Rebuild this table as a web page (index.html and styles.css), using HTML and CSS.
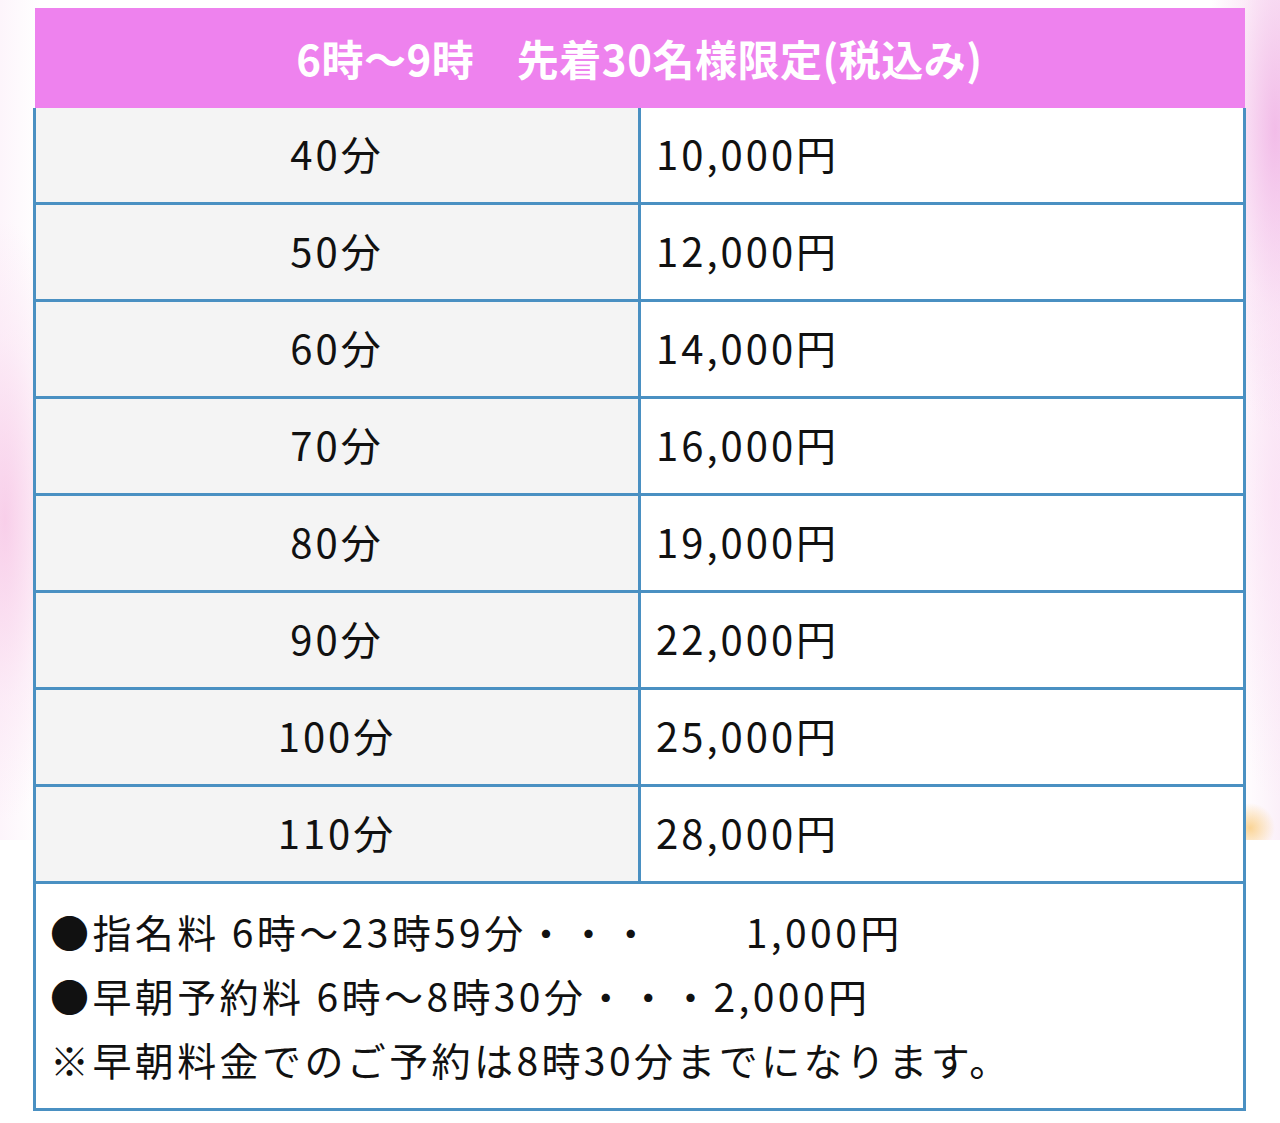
FILE: index.html
```html
<!DOCTYPE html>
<html lang="ja">
<head>
<meta charset="utf-8">
<title>料金表</title>
<link rel="stylesheet" href="styles.css">
</head>
<body>
<div class="page">
  <div class="bg"></div>
  <div class="wrap">
    <table class="price">
      <thead>
        <tr><th colspan="2" class="head">6時〜9時　先着30名様限定(税込み)</th></tr>
      </thead>
      <tbody>
        <tr><td class="dur">40分</td><td class="amt">10,000円</td></tr>
        <tr><td class="dur">50分</td><td class="amt">12,000円</td></tr>
        <tr><td class="dur">60分</td><td class="amt">14,000円</td></tr>
        <tr><td class="dur">70分</td><td class="amt">16,000円</td></tr>
        <tr><td class="dur">80分</td><td class="amt">19,000円</td></tr>
        <tr><td class="dur">90分</td><td class="amt">22,000円</td></tr>
        <tr><td class="dur">100分</td><td class="amt">25,000円</td></tr>
        <tr><td class="dur">110分</td><td class="amt">28,000円</td></tr>
        <tr><td colspan="2" class="notes">
          <p>●指名料 6時〜23時59分・・・<span class="gap"></span>1,000円</p>
          <p>●早朝予約料 6時〜8時30分・・・2,000円</p>
          <p>※早朝料金でのご予約は8時30分までになります。</p>
        </td></tr>
      </tbody>
    </table>
  </div>
</div>
</body>
</html>
```
FILE: styles.css
```css
html, body {
  margin: 0;
  padding: 0;
  background: #ffffff;
}
body {
  font-family: "Noto Sans CJK JP", "Noto Sans", sans-serif;
  color: #111;
}
.page {
  position: relative;
  width: 1280px;
  min-height: 1123px;
}
.bg {
  position: absolute;
  left: 0;
  top: 0;
  width: 1280px;
  height: 840px;
  background:
    radial-gradient(ellipse 70px 300px at 5px 520px, rgba(246, 190, 226, 0.7), rgba(250, 220, 240, 0.4) 60%, rgba(255,255,255,0) 100%),
    radial-gradient(ellipse 70px 300px at 1275px 130px, rgba(240, 175, 228, 0.8), rgba(248, 212, 240, 0.45) 60%, rgba(255,255,255,0) 100%),
    radial-gradient(ellipse 60px 300px at 1275px 500px, rgba(250, 218, 242, 0.6), rgba(255,255,255,0) 100%),
    radial-gradient(ellipse 25px 25px at 1250px 828px, rgba(250, 205, 130, 0.85), rgba(255,255,255,0) 100%),
    linear-gradient(to right, #fdf5fb 0, #ffffff 40px, #ffffff 1240px, #fbf0f9 1280px);
}
.wrap {
  position: relative;
  padding: 8px 34px 0 33px;
}
.price {
  width: 1213px;
  border-collapse: collapse;
  table-layout: fixed;
}
.head {
  height: 98px;
  padding: 0 0 2px 0;
  background: #ee82ee;
  color: #fff;
  font-weight: 700;
  font-size: 42px;
  letter-spacing: 0.5px;
  text-align: center;
  vertical-align: middle;
}
.price td {
  border: 3px solid #4a90c2;
  height: 90px;
  padding: 0 0 4px 0;
  font-size: 40px;
  vertical-align: middle;
  letter-spacing: 3px;
}
.price tbody tr:first-child td {
  border-top: none;
}
.dur {
  width: 602px;
  background: #f4f4f4;
  text-align: center;
}
.amt {
  background: #fff;
  padding-left: 15px !important;
  text-align: left;
}
.price td.notes {
  height: auto;
  padding: 15px 14px 17px 14px;
  background: #fff;
  font-weight: 400;
  font-size: 39px;
  letter-spacing: 3.4px;
}
.notes p {
  margin: 0;
  line-height: 64px;
  white-space: pre;
}
.gap {
  display: inline-block;
  width: 92px;
}
```
